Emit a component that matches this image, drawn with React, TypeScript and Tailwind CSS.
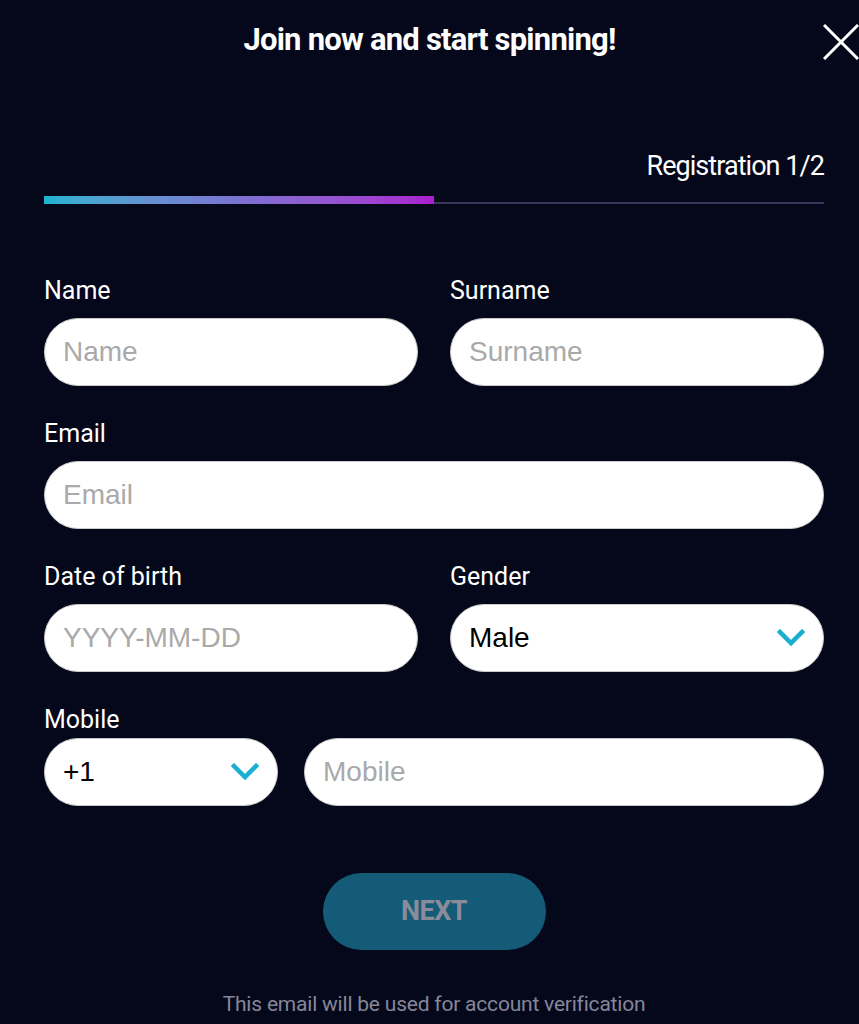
import React from "react";

const Chevron = () => (
  <svg width="28" height="18" viewBox="0 0 28 18" fill="none" className="shrink-0">
    <path d="M3 3 L14 14 L25 3" stroke="#1aaed0" strokeWidth="4.5" strokeLinecap="square" strokeLinejoin="miter" />
  </svg>
);

const labelCls = "block h-[28px] leading-[28px] text-[25px] text-white font-['Roboto',sans-serif] font-normal";
const inputCls =
  "h-[68px] w-full rounded-full bg-white border border-[#c9c9c9] px-[18px] text-[28px] text-black placeholder:text-[#a9a9a9] font-['Liberation_Sans',Arial,sans-serif] outline-none";

function Field({ label, placeholder }: { label: string; placeholder: string }) {
  return (
    <div className="flex flex-col">
      <label className={labelCls}>{label}</label>
      <input className={inputCls + " mt-[13px]"} placeholder={placeholder} />
    </div>
  );
}

function Select({ value, className = "" }: { value: string; className?: string }) {
  return (
    <div
      className={
        "h-[68px] rounded-full bg-white border border-[#c9c9c9] pl-[18px] pr-[18px] flex items-center justify-between " +
        className
      }
    >
      <span className="text-[28px] text-black font-['Liberation_Sans',Arial,sans-serif]">{value}</span>
      <Chevron />
    </div>
  );
}

export default function App() {
  return (
    <div className="w-[859px] h-[1024px] bg-[#05081a] relative overflow-hidden font-['Roboto',sans-serif]">
      <div className="pt-[20px] h-[60px] text-center text-white font-bold text-[31px] leading-[40px] tracking-[-0.025em]">
        Join now and start spinning!
      </div>
      <button className="absolute left-[823px] top-[24px] w-[36px] h-[36px]" aria-label="close">
        <svg width="36" height="36" viewBox="0 0 36 36">
          <path d="M1 1 L35 35 M35 1 L1 35" stroke="white" strokeWidth="3" />
        </svg>
      </button>

      <div className="ml-[44px] w-[780px]">
        <div className="mt-[90px] h-[32px] leading-[32px] text-right text-white text-[27px] tracking-[-0.035em]">
          Registration 1/2
        </div>
        <div className="mt-[14px] h-[8px] flex items-end">
          <div className="h-[8px] w-[390px] bg-gradient-to-r from-[#1bb3d1] via-[#7b72d2] to-[#a91ccf]" />
          <div className="h-[2px] flex-1 bg-[#37355a]" />
        </div>

        <div className="mt-[73px] grid grid-cols-2 gap-x-[32px]">
          <Field label="Name" placeholder="Name" />
          <Field label="Surname" placeholder="Surname" />
        </div>

        <div className="mt-[34px]">
          <Field label="Email" placeholder="Email" />
        </div>

        <div className="mt-[34px] grid grid-cols-2 gap-x-[32px]">
          <Field label="Date of birth" placeholder="YYYY-MM-DD" />
          <div className="flex flex-col">
            <label className={labelCls}>Gender</label>
            <Select value="Male" className="mt-[13px]" />
          </div>
        </div>

        <div className="mt-[34px]">
          <label className={labelCls}>Mobile</label>
          <div className="mt-[4px] flex gap-[26px]">
            <Select value="+1" className="w-[234px] shrink-0" />
            <input className={inputCls + " flex-1"} placeholder="Mobile" />
          </div>
        </div>

        <div className="mt-[67px] flex justify-center">
          <button className="w-[223px] h-[77px] rounded-full bg-[#135b76] text-[#8a8b9b] font-bold text-[27px] tracking-[-0.02em]">
            NEXT
          </button>
        </div>

        <div className="mt-[40px] text-center text-[#85869a] text-[21px] leading-[28px] font-normal tracking-[-0.01em]">
          This email will be used for account verification
        </div>
      </div>
    </div>
  );
}
